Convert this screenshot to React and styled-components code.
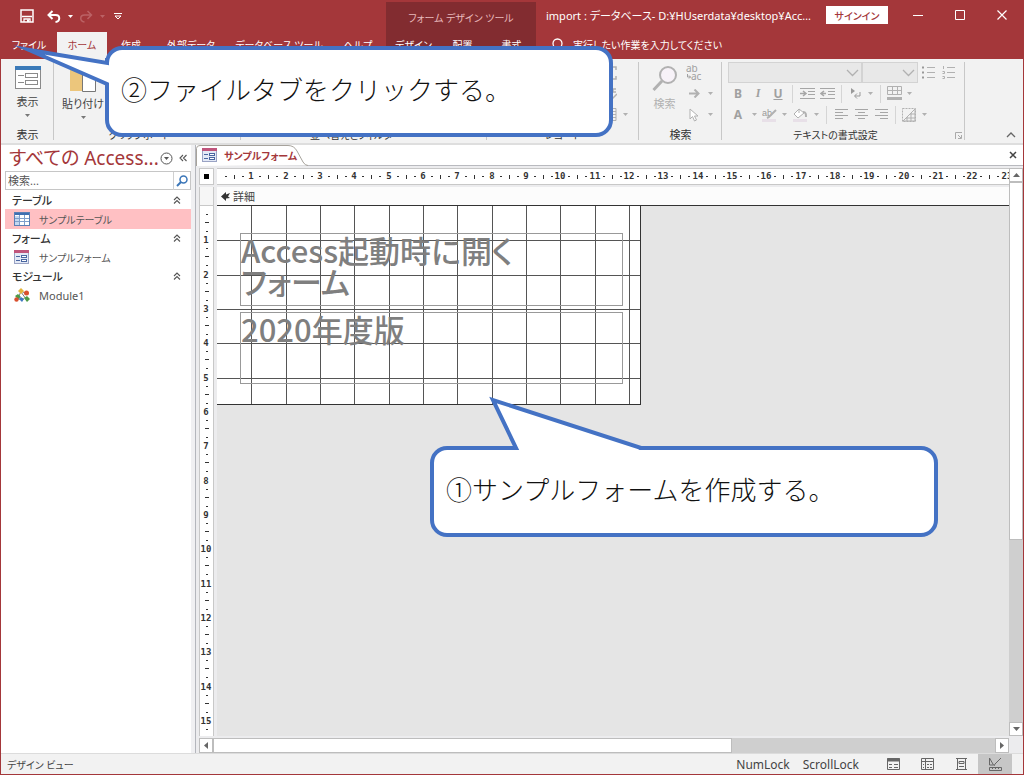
import React, { useEffect, useRef, useState } from "react";
import styled, { createGlobalStyle, css } from "styled-components";

const theme = {
    red: "#a4373a",
    darkRed: "#822c30",
    ribbon: "#f2f2f2",
    text: "#444444",
    disabled: "#b1b1b1",
    callout: "#4472c4",
    font: `"Noto Sans", "Noto Sans CJK JP", sans-serif`,
    jpFont: `"Noto Sans CJK JP", sans-serif`,
};

const mainTabs = [
    { name: "ファイル", width: 56 },
    { name: "ホーム", width: 50, active: true },
    { name: "作成", width: 48 },
    { name: "外部データ", width: 72 },
    { name: "データベース ツール", width: 104 },
    { name: "ヘルプ", width: 54 },
];

const designTabs = ["デザイン", "配置", "書式"];

// one centimetre on the rulers and on the grid
const cm = (n) => Math.round((n * 103) / 3);
const range = (n) => Array.from({ length: n }, (_, i) => i);

const useSize = () => {
    const ref = useRef(null);
    const [size, setSize] = useState({ width: 0, height: 0 });

    useEffect(() => {
        const measure = () => setSize({
            width: ref.current.clientWidth,
            height: ref.current.clientHeight,
        });
        measure();
        window.addEventListener("resize", measure);
        return () => window.removeEventListener("resize", measure);
    }, []);

    return [ref, size];
};

const TableIcon = () => (
    <svg width="16" height="14" viewBox="0 0 16 14">
        <rect x="0.5" y="0.5" width="15" height="13" fill="#fff" stroke="#5b7fb5" />
        <rect x="1" y="1" width="14" height="2" fill="#3f6fb0" />
        <rect x="1" y="4" width="4" height="9" fill="#c5d8f0" />
        <path d="M1 6.5h14M1 9.5h14M5.5 3v10M10.5 3v10" stroke="#7f9fcb" />
    </svg>
);

const FormIcon = () => (
    <svg width="15" height="14" viewBox="0 0 15 14">
        <rect x="0.5" y="0.5" width="14" height="13" fill="#e3e9f6" stroke="#9aa3c4" />
        <rect x="0" y="0" width="15" height="3" fill="#c0557c" />
        <path d="M2 6.5h4M2 10.5h4" stroke="#4a66a0" />
        <rect x="7.5" y="5.5" width="5" height="2" fill="#fff" stroke="#4a66a0" />
        <rect x="7.5" y="9.5" width="5" height="2" fill="#fff" stroke="#4a66a0" />
    </svg>
);

const ModuleIcon = () => (
    <svg width="16" height="14" viewBox="0 0 16 14">
        <path d="M7 3L4 11M7 3l6 3M4 11l6 0M7 4l5 7" stroke="#777" fill="none" />
        <path d="M4 3l3-3 3 3-3 3z" fill="#e3b53c" />
        <path d="M1 8l3-2 3 3-3 2z" fill="#4d9a46" />
        <circle cx="12.5" cy="5" r="2.5" fill="#d9502e" />
        <circle cx="2.5" cy="11.5" r="2.2" fill="#d9502e" />
        <path d="M5 11l2-2 3 2-2 3z" fill="#3f78c0" />
        <path d="M10 10l3-2 3 3-3 3z" fill="#4d9a46" />
    </svg>
);

const DownArrow = ({ color = "#777" }) => (
    <svg width="5" height="3" viewBox="0 0 5 3">
        <path d="M0 0h5L2.5 3z" fill={color} />
    </svg>
);

const Collapse = () => (
    <svg width="8" height="8" viewBox="0 0 8 8">
        <path d="M1 4l3-3 3 3M1 7.5l3-3 3 3" stroke="#555" fill="none" strokeWidth="1.1" />
    </svg>
);

const Lines = ({ rows }) => (
    <svg width="13" height="11" viewBox="0 0 13 11">
        {rows.map(([x, w], i) => (
            <rect key={i} x={x} y={i * 3} width={w} height="1" fill="#a6a6a6" />
        ))}
    </svg>
);

const Arrow = ({ label }) => (
    <Tool $w={12} aria-label={label} disabled>
        <DownArrow color={theme.disabled} />
    </Tool>
);

const FontBox = ({ label, width }) => (
    <SelectWrap $w={width}>
        <Select aria-label={label} disabled />
        <svg width="13" height="8" viewBox="0 0 13 8">
            <path d="M1 1l5.5 5.5L12 1" stroke={theme.disabled} fill="none" strokeWidth="1.3" />
        </svg>
    </SelectWrap>
);

const Header = () => (
    <Top>
        <QuickAccess>
            <QuickButton $w={28} aria-label="上書き保存">
                <svg width="14" height="14" viewBox="0 0 14 14">
                    <path d="M1 1h12v12H1z" fill="none" stroke="#fff" strokeWidth="1.5" />
                    <path d="M2 7.5h10M4 13v-3h6v3" fill="none" stroke="#fff" strokeWidth="1.3" />
                    <rect x="7" y="10.5" width="2" height="2.5" fill="#fff" />
                </svg>
            </QuickButton>
            <QuickButton $w={26} aria-label="元に戻す">
                <svg width="14" height="13" viewBox="0 0 14 13">
                    <path d="M5.5 1L1.5 5l4 4M2 5h6.500c5 0 5 6.500 0 7" fill="none" stroke="#fff" strokeWidth="2" />
                </svg>
            </QuickButton>
            <QuickButton $w={6} aria-label="元に戻す一覧"><DownArrow color="#fff" /></QuickButton>
            <QuickButton $w={26} aria-label="やり直し">
                <svg width="14" height="13" viewBox="0 0 14 13">
                    <path d="M8.5 1l4 4-4 4M12 5H5.500c-5 0-5 6.500 0 7" fill="none" stroke="#bb6265" strokeWidth="1.5" />
                </svg>
            </QuickButton>
            <QuickButton $w={6} aria-label="やり直し一覧"><DownArrow color="#bb6265" /></QuickButton>
            <QuickButton $w={26} aria-label="クイック アクセスのカスタマイズ">
                <svg width="8" height="7" viewBox="0 0 8 7">
                    <path d="M0 0.5h8M1 3h6L4 6z" fill="none" stroke="#fff" />
                </svg>
            </QuickButton>
        </QuickAccess>
        <ToolTitle>フォーム デザイン ツール</ToolTitle>
        <TitleArea>
            <WindowTitle>import : データベース- D:¥HUserdata¥desktop¥Acc…</WindowTitle>
            <SignIn>サインイン</SignIn>
            <WindowButton aria-label="最小化">
                <svg width="10" height="11"><path d="M0 5.5h10" stroke="#fff" /></svg>
            </WindowButton>
            <WindowButton aria-label="最大化">
                <svg width="10" height="10"><path d="M0.5 0.5h9v9h-9z" fill="none" stroke="#fff" /></svg>
            </WindowButton>
            <WindowButton aria-label="閉じる">
                <svg width="10" height="10"><path d="M0.5 0.5l9 9M9.5 0.5l-9 9" stroke="#fff" strokeWidth="1.2" /></svg>
            </WindowButton>
        </TitleArea>
        <TabRow>
            {mainTabs.map((tab) => (
                <Tab key={tab.name} $w={tab.width} $active={tab.active}>{tab.name}</Tab>
            ))}
        </TabRow>
        <DesignTabs>
            {designTabs.map((name) => (
                <Tab key={name}>{name}</Tab>
            ))}
        </DesignTabs>
        <TellMe>
            <svg width="14" height="14" viewBox="0 0 14 14">
                <circle cx="7.5" cy="5.5" r="4.5" fill="none" stroke="#fff" strokeWidth="1.3" />
                <path d="M4.5 9L1.5 13" stroke="#fff" strokeWidth="1.3" />
            </svg>
            <TellMeInput aria-label="操作アシスト" placeholder="実行したい作業を入力してください" />
        </TellMe>
    </Top>
);

const Ribbon = () => (
    <RibbonBar>
        <Group $w={53}>
            <BigButton>
                <svg width="26" height="24" viewBox="0 0 26 24">
                    <rect x="0.5" y="0.5" width="25" height="22" fill="#fff" stroke="#8a8a8a" />
                    <rect width="26" height="4" fill="#3b7ab8" />
                    <path d="M3 9.5h6M3 16.5h6" stroke="#8a8a8a" />
                    <rect x="10.5" y="7.5" width="12" height="4" fill="#fff" stroke="#8a8a8a" />
                    <rect x="10.5" y="14.5" width="12" height="4" fill="#fff" stroke="#8a8a8a" />
                </svg>
                表示
                <DownArrow />
            </BigButton>
            <GroupLabel>表示</GroupLabel>
        </Group>
        <Group $w={187}>
            <GroupBody>
                <BigButton $w={46}>
                    <svg width="28" height="26" viewBox="0 0 28 26">
                        <rect x="1" y="0" width="22" height="25" fill="#ecc67c" />
                        <path d="M13.5 7.5h9l4 4v14h-13z" fill="#fff" stroke="#777" />
                        <path d="M22.5 7.5v4h4" fill="none" stroke="#777" />
                    </svg>
                    貼り付け
                    <DownArrow />
                </BigButton>
            </GroupBody>
            <GroupLabel $launcher $kana>クリップボード</GroupLabel>
        </Group>
        <Group $w={246}>
            <GroupBody />
            <GroupLabel $launcher $kana>並べ替えとフィルター</GroupLabel>
        </Group>
        <Group $w={152}>
            <GroupBody $end>
                <ToolColumn>
                    <ToolLine>
                        <Tool $w={18} aria-label="集計" disabled>
                            <svg width="14" height="14"><path d="M13 4V1H1l6 6-6 6h12v-3" fill="none" stroke={theme.disabled} strokeWidth="1.5" /></svg>
                        </Tool>
                    </ToolLine>
                    <ToolLine>
                        <Tool $w={18} aria-label="スペル チェック" disabled>
                            <svg width="14" height="14"><path d="M13 2h-3v3h3M5 9l3 4 6-6" fill="none" stroke={theme.disabled} strokeWidth="1.5" /></svg>
                        </Tool>
                    </ToolLine>
                    <ToolLine>
                        <Tool $w={18} aria-label="その他" disabled>
                            <svg width="14" height="13"><path d="M1 0.5h12v12H1zM1 3.5h12M5 3.5v9M9 3.5v9M1 6.5h12M1 9.5h12" fill="none" stroke={theme.disabled} /></svg>
                        </Tool>
                        <Arrow label="その他の一覧" />
                    </ToolLine>
                </ToolColumn>
            </GroupBody>
            <GroupLabel $kana>レコード</GroupLabel>
        </Group>
        <Group $w={83}>
            <GroupBody>
                <BigButton $w={44} disabled>
                    <svg width="26" height="26" viewBox="0 0 26 26">
                        <path d="M10 15L1.5 24" stroke={theme.disabled} strokeWidth="3" />
                        <circle cx="16" cy="9" r="8" fill="#f7f2f8" stroke={theme.disabled} strokeWidth="2" />
                    </svg>
                    検索
                </BigButton>
                <ToolColumn>
                    <ToolLine>
                        <Tool $w={20} aria-label="置換" disabled>
                            <svg width="16" height="16" fill="#a0a0a0" fontSize="10" fontFamily="Noto Sans">
                                <text x="0" y="7">ab</text>
                                <text x="5" y="15">ac</text>
                                <path d="M1.5 9v3h3M3 10.5l1.5 1.5L3 13.500" fill="none" stroke="#a0a0a0" />
                            </svg>
                        </Tool>
                    </ToolLine>
                    <ToolLine>
                        <Tool $w={20} aria-label="ジャンプ" disabled>
                            <svg width="11" height="9"><path d="M0 4.5h9M5.5 0.5l4 4-4 4" fill="none" stroke={theme.disabled} strokeWidth="2" /></svg>
                        </Tool>
                        <Arrow label="ジャンプの一覧" />
                    </ToolLine>
                    <ToolLine>
                        <Tool $w={20} aria-label="選択" disabled>
                            <svg width="10" height="14"><path d="M1 1v10l2.5-2.5L5.5 13l2-1-2-4H9z" fill="#fff" stroke={theme.disabled} /></svg>
                        </Tool>
                        <Arrow label="選択の一覧" />
                    </ToolLine>
                </ToolColumn>
            </GroupBody>
            <GroupLabel>検索</GroupLabel>
        </Group>
        <Group $w={243}>
            <GroupBody>
                <FontTools>
                    <ToolLine>
                        <FontBox label="フォント" width={134} />
                        <FontBox label="フォント サイズ" width={56} />
                        <Tool $w={20} aria-label="箇条書き" disabled>
                            <svg width="13" height="13">
                                <path d="M0 1.5h2M0 6.5h2M0 11.5h2" stroke="#999" strokeWidth="2" />
                                <path d="M5 1.5h8M5 6.5h8M5 11.5h8" stroke={theme.disabled} />
                            </svg>
                        </Tool>
                        <Tool $w={20} aria-label="段落番号" disabled>
                            <svg width="13" height="15" stroke={theme.disabled} fill="none">
                                <path d="M5 2.5h8M5 7.5h8M5 12.5h8M1.5 1v3M0.5 6.500h2v2h-2M0.5 11.500h2v2h-2" />
                            </svg>
                        </Tool>
                    </ToolLine>
                    <ToolLine>
                        <Tool $w={20} $bold disabled>B</Tool>
                        <Tool $w={20} $serif disabled>I</Tool>
                        <Tool $w={20} $underline disabled>U</Tool>
                        <Divider />
                        <Tool $w={20} aria-label="インデント" disabled>
                            <svg width="15" height="11" stroke="#a6a6a6" fill="none"><path d="M0 0.5h15M8 3.5h7M8 6.5h7M0 10.5h15" /><path d="M0 5.5h5M3 3l3 2.5-3 2.5" strokeWidth="1.5" /></svg>
                        </Tool>
                        <Tool $w={20} aria-label="インデント解除" disabled>
                            <svg width="15" height="11" stroke="#a6a6a6" fill="none"><path d="M0 0.5h15M8 3.5h7M8 6.5h7M0 10.5h15" /><path d="M1 5.5h5M4 3L1 5.5 4 8" strokeWidth="1.5" /></svg>
                        </Tool>
                        <Divider />
                        <Tool $w={18} aria-label="文字列の方向" disabled>
                            <svg width="11" height="11"><path d="M1 0v6l4-3z" fill="#999" /><path d="M10 4v4H5M7 5.5L4.5 8 7 10.5" fill="none" stroke="#999" /></svg>
                        </Tool>
                        <Arrow label="文字列の方向の一覧" />
                        <Divider />
                        <Tool $w={18} aria-label="枠線" disabled>
                            <svg width="15" height="15"><path d="M0.5 0.5h14v8H0.5zM0 4.5h15M5.5 0v9M10.5 0v9" fill="none" stroke={theme.disabled} /><rect y="11" width="15" height="3" fill={theme.disabled} /></svg>
                        </Tool>
                        <Arrow label="枠線の一覧" />
                    </ToolLine>
                    <ToolLine>
                        <Tool $w={20} $bold disabled>A</Tool>
                        <Arrow label="フォントの色の一覧" />
                        <Tool $w={18} aria-label="蛍光ペン" disabled>
                            <svg width="15" height="14"><text x="0" y="8" fontSize="9" fontFamily="Liberation Sans" fill="#999">ab</text><path d="M14 2L7 9l-2 1" stroke={theme.disabled} strokeWidth="2" fill="none" /><rect y="11" width="14" height="3" fill="#e8e0e8" /></svg>
                        </Tool>
                        <Arrow label="蛍光ペンの一覧" />
                        <Tool $w={20} aria-label="背景色" disabled>
                            <svg width="15" height="14"><path d="M6 1L1 6l4 4 6-5zM6 1v4" fill="#fff" stroke={theme.disabled} /><path d="M10 4c3 0 3 2 3 5" stroke={theme.disabled} strokeWidth="2" fill="none" /><rect y="11" width="14" height="3" fill="#e8e0e8" /></svg>
                        </Tool>
                        <Arrow label="背景色の一覧" />
                        <Divider />
                        <Tool $w={20} aria-label="左揃え" disabled><Lines rows={[[0, 13], [0, 8], [0, 13], [0, 8]]} /></Tool>
                        <Tool $w={20} aria-label="中央揃え" disabled><Lines rows={[[0, 13], [3, 7], [0, 13], [3, 7]]} /></Tool>
                        <Tool $w={20} aria-label="右揃え" disabled><Lines rows={[[0, 13], [5, 8], [0, 13], [5, 8]]} /></Tool>
                        <Divider />
                        <Tool $w={18} aria-label="交互の行の色" disabled>
                            <svg width="14" height="14"><path d="M0.5 0.5h13v13H0.5z" fill="none" stroke={theme.disabled} strokeDasharray="2 1" /><path d="M1 13L13 1v12zM5 9v4M9 5v8M8 6h5M4 10h9" fill="none" stroke={theme.disabled} /></svg>
                        </Tool>
                        <Arrow label="交互の行の色の一覧" />
                    </ToolLine>
                </FontTools>
            </GroupBody>
            <GroupLabel $launcher $kana>
                テキストの書式設定
                <Launcher aria-label="テキストの書式設定を開く">
                    <svg width="7" height="7"><path d="M0.5 7V0.5H7M3 3l3 3M6.5 3v3.5H3" fill="none" stroke="#aaa" /></svg>
                </Launcher>
            </GroupLabel>
        </Group>
        <RibbonEnd>
            <Launcher aria-label="リボンを折りたたむ">
                <svg width="10" height="6"><path d="M1 5l4-4 4 4" fill="none" stroke="#666" strokeWidth="1.3" /></svg>
            </Launcher>
        </RibbonEnd>
    </RibbonBar>
);

const NavSection = ({ title, icon, item, selected, kana }) => (
    <>
        <SectionTitle>
            {title}
            <Collapse />
        </SectionTitle>
        <NavItem href="#" $selected={selected} $kana={kana}>
            <NavIcon>{icon}</NavIcon>
            {item}
        </NavItem>
    </>
);

const NavigationPane = () => (
    <Nav>
        <NavHeader>
            <NavTitle>すべての Access...</NavTitle>
            <IconButton aria-label="一覧を選択">
                <svg width="13" height="13"><circle cx="6.5" cy="6.5" r="5.5" fill="none" stroke="#555" /><path d="M4 5h5L6.5 8z" fill="#555" /></svg>
            </IconButton>
            <IconButton aria-label="ナビゲーション ウィンドウを閉じる">
                <svg width="8" height="8"><path d="M4 1L1 4l3 3M7.5 1l-3 3 3 3" fill="none" stroke="#555" strokeWidth="1.1" /></svg>
            </IconButton>
        </NavHeader>
        <SearchBox>
            <SearchInput aria-label="検索" placeholder="検索..." />
            <SearchButton aria-label="検索の実行">
                <svg width="12" height="12"><circle cx="7.5" cy="4.5" r="3.5" fill="none" stroke="#3b76b8" strokeWidth="1.5" /><path d="M5 7L1 11" stroke="#3b76b8" strokeWidth="2" /></svg>
            </SearchButton>
        </SearchBox>
        <NavSection title="テーブル" icon={<TableIcon />} item="サンプルテーブル" kana selected />
        <NavSection title="フォーム" icon={<FormIcon />} item="サンプルフォーム" kana />
        <NavSection title="モジュール" icon={<ModuleIcon />} item="Module1" />
    </Nav>
);

const HorizontalRuler = () => {
    const [ref, { width }] = useSize();

    return (
        <RulerTop ref={ref}>
            <RulerSvg width="100%" height="15">
                {range(100).filter((i) => cm(i) < width).map((i) => (
                    <g key={i}>
                        {i > 0 && <text x={cm(i)} y="10">{i}</text>}
                        <rect x={cm(i) + 8} y="7" width="2" height="1" />
                        <rect x={cm(i) + 17} y="6" width="1" height="4" />
                        <rect x={cm(i) + 25} y="7" width="2" height="1" />
                    </g>
                ))}
            </RulerSvg>
        </RulerTop>
    );
};

const VerticalRuler = () => {
    const [ref, { height }] = useSize();

    return (
        <RulerLeft ref={ref}>
            <SectionSelector aria-label="詳細の選択" />
            <RulerSvg width="13" height={Math.max(height - 19, 0)}>
                {range(60).filter((i) => cm(i) < height - 24).map((i) => (
                    <g key={i}>
                        {i > 0 && <text x="6" y={cm(i) + 3}>{i}</text>}
                        <rect x="6" y={cm(i) + 8} width="2" height="1" />
                        <rect x="5" y={cm(i) + 16} width="4" height="1" />
                        <rect x="6" y={cm(i) + 25} width="2" height="1" />
                    </g>
                ))}
            </RulerSvg>
        </RulerLeft>
    );
};

const FormDesign = () => (
    <FormSurface>
        <Grid>
            {range(12).map((i) => (
                <rect key={`v${i}`} x={cm(i + 1)} y="0" width="1" height="100%" />
            ))}
            {range(5).map((i) => (
                <rect key={`h${i}`} x="0" y={cm(i + 1)} width="100%" height="1" />
            ))}
        </Grid>
        <FormLabel>Access起動時に開く<br />フォーム</FormLabel>
        <FormLabel>2020年度版</FormLabel>
    </FormSurface>
);

const Designer = () => (
    <Document>
        <DocumentTabs>
            <DocumentTab>
                <svg width="112" height="21">
                    <path d="M0.5 21V3.5Q0.5 0.5 4 0.5H92Q98 0.5 101 6L107 17Q109 20.5 112 20.5" fill="#fff" stroke="#a7a39c" />
                </svg>
                <FormIcon />
                <span>サンプルフォーム</span>
            </DocumentTab>
            <IconButton aria-label="サンプルフォームを閉じる">
                <svg width="8" height="8"><path d="M1 1l6 6M7 1L1 7" stroke="#444" strokeWidth="1.5" /></svg>
            </IconButton>
        </DocumentTabs>
        <Workspace>
            <Corner aria-label="フォームの選択" />
            <HorizontalRuler />
            <VerticalRuler />
            <Canvas>
                <DetailBar>
                    <svg width="9" height="9"><path d="M0 4.5L5 0v2.5L9 1 7 4.5 9 6 5 6.5V9z" fill="#333" /></svg>
                    詳細
                </DetailBar>
                <FormDesign />
            </Canvas>
            <VerticalScroll>
                <ScrollButton aria-label="上へ"><svg width="7" height="4"><path d="M0 4h7L3.5 0z" fill="#666" /></svg></ScrollButton>
                <Thumb $grow={358} />
                <Track $grow={183} />
                <ScrollButton aria-label="下へ"><svg width="7" height="4"><path d="M0 0h7L3.5 4z" fill="#666" /></svg></ScrollButton>
            </VerticalScroll>
            <HorizontalScroll>
                <ScrollButton aria-label="左へ"><svg width="4" height="7"><path d="M4 0v7L0 3.5z" fill="#666" /></svg></ScrollButton>
                <Thumb $grow={518} />
                <Track $grow={263} />
                <ScrollButton aria-label="右へ"><svg width="4" height="7"><path d="M0 0v7l4-3.5z" fill="#666" /></svg></ScrollButton>
            </HorizontalScroll>
        </Workspace>
    </Document>
);

const Status = () => (
    <StatusBar>
        <StatusText>デザイン ビュー</StatusText>
        <span>NumLock</span>
        <span>ScrollLock</span>
        <Views>
            <ViewButton aria-label="フォーム ビュー">
                <svg width="13" height="12" fill="none" stroke="#666"><path d="M0.5 0.5h12v11H0.5z" /><path d="M0 2h13" strokeWidth="3" /><path d="M2 6.5h3M2 9.5h3M7 6.5h4M7 9.5h4" /></svg>
            </ViewButton>
            <ViewButton aria-label="データシート ビュー">
                <svg width="13" height="12" fill="none" stroke="#666"><path d="M0.5 0.5h12v11H0.5zM0 3.5h13M4.5 0v12M2 6.5h1M2 9.5h1M6 6.5h2M9 6.5h2M6 9.5h2M9 9.5h2" /></svg>
            </ViewButton>
            <ViewButton aria-label="レイアウト ビュー">
                <svg width="11" height="12" fill="none" stroke="#666"><path d="M0 0.5h11M0 11.5h11M1.5 0v12M9.5 0v12M3 3.5h5v2H3zM3 8.5h5" /></svg>
            </ViewButton>
            <ViewButton aria-label="デザイン ビュー" $active>
                <svg width="14" height="13" fill="none" stroke="#666"><path d="M1.5 0v7h4zM13 0L7 6l-1 2" /><path d="M1.5 9.5h12v3h-12zM4.5 10v1M7.5 10v1M10.5 10v1" /></svg>
            </ViewButton>
        </Views>
    </StatusBar>
);

const App = () => {
    return (
        <>
            <GlobalStyle />
            <Window>
                <Header />
                <Ribbon />
                <Main>
                    <NavigationPane />
                    <Designer />
                </Main>
                <Status />
                <Callout $left={104} $top={46}>
                    <Tail $left={-97} $top={-6} width="100" height="52" viewBox="0 0 100 52">
                        <path d="M95 19L17 6l78 34h3V19z" fill="#fff" />
                        <path d="M95 14V19L17 6l78 34v6" fill="none" stroke={theme.callout} strokeWidth="4" strokeMiterlimit="12" />
                    </Tail>
                    ②ファイルタブをクリックする。
                </Callout>
                <Callout $left={429} $top={446}>
                    <Tail $left={52} $top={-54} width="166" height="58" viewBox="0 0 166 58">
                        <path d="M30 52L7 4l148 48-4 3H31z" fill="#fff" />
                        <path d="M22 52H30L7 4l148 48h7" fill="none" stroke={theme.callout} strokeWidth="4" />
                    </Tail>
                    ①サンプルフォームを作成する。
                </Callout>
            </Window>
        </>
    );
};

const GlobalStyle = createGlobalStyle`
    * {
        box-sizing: border-box;
    }

    body {
        margin: 0;
        font-family: ${theme.font};
        font-size: 11px;
        font-feature-settings: "palt";
        color: ${theme.text};
    }

    button, input, select {
        font: inherit;
        font-feature-settings: inherit;
        color: inherit;
        border: 0;
        border-radius: 0;
        padding: 0;
        background: none;
        outline: none;
    }

    svg {
        flex-shrink: 0;
    }
`;

const center = css`
    display: flex;
    align-items: center;
    justify-content: center;
`;

const Window = styled.div`
    position: relative;
    display: flex;
    flex-direction: column;
    height: 100vh;
    overflow: hidden;
    border: 1px solid ${theme.red};
    border-top: 0;
    background: #fff;
`;

const Top = styled.header`
    display: grid;
    grid-template-columns: 385px 150px 1fr;
    grid-template-rows: 32px 27px;
    background: ${theme.red};
    color: #fff;
`;

const QuickAccess = styled.div`
    display: flex;
    align-items: center;
    padding-left: 12px;
`;

const QuickButton = styled.button`
    ${center}
    width: ${(props) => props.$w}px;
    height: 24px;
`;

const ToolTitle = styled.div`
    ${center}
    margin-top: 2px;
    background: ${theme.darkRed};
    color: #e8b9bb;
    font-size: 10px;
`;

const TitleArea = styled.div`
    display: flex;
    align-items: center;
    min-width: 0;
    padding-bottom: 2px;
`;

const WindowTitle = styled.div`
    flex: 1;
    padding-left: 10px;
    overflow: hidden;
    white-space: nowrap;
`;

const SignIn = styled.button`
    width: 62px;
    height: 18px;
    margin-right: 9px;
    background: #fff;
    color: ${theme.red};
    font-size: 10px;
    font-weight: 500;
`;

const WindowButton = styled.button`
    ${center}
    width: 42px;
    height: 30px;
`;

const TabRow = styled.div`
    display: flex;
`;

const Tab = styled.button`
    ${center}
    width: ${(props) => (props.$w ? `${props.$w}px` : "50px")};
    padding-bottom: 2px;
    white-space: nowrap;
    font-size: 10px;
    color: ${(props) => (props.$active ? theme.red : "#fff")};
    background: ${(props) => (props.$active ? theme.ribbon : "transparent")};
`;

const DesignTabs = styled(TabRow)`
    background: ${theme.darkRed};
    padding-left: 3px;
`;

const TellMe = styled.label`
    display: flex;
    align-items: center;
    gap: 9px;
    padding: 0 0 2px 14px;
`;

const TellMeInput = styled.input`
    flex: 1;
    font-size: 10px;

    &::placeholder {
        color: #fff;
        opacity: 1;
    }
`;

const RibbonBar = styled.div`
    display: flex;
    padding: 3px 0 1px;
    background: ${theme.ribbon};
    border-bottom: 2px solid #dedede;
`;

const Group = styled.section`
    position: relative;
    display: flex;
    flex-direction: column;
    width: ${(props) => props.$w}px;
    height: 80px;

    &::after {
        content: "";
        position: absolute;
        right: 0;
        top: 0;
        width: 1px;
        height: 78px;
        background: #c8c8c8;
    }
`;

const GroupBody = styled.div`
    display: flex;
    height: 64px;
    padding: 0 6px;
    justify-content: ${(props) => (props.$end ? "flex-end" : "flex-start")};
`;

const GroupLabel = styled.div`
    ${center}
    position: relative;
    flex: 1;
    white-space: nowrap;
    color: #333;
    font-size: ${(props) => (props.$kana ? 10 : 11)}px;
    padding-right: ${(props) => (props.$launcher ? 16 : 0)}px;
`;

const Launcher = styled.button`
    ${center}
    width: 14px;
    height: 14px;

    ${GroupLabel} & {
        position: absolute;
        right: 0;
        top: 2px;
    }
`;

const RibbonEnd = styled.div`
    flex: 1;
    display: flex;
    align-items: flex-end;
    justify-content: flex-end;
    padding-right: 5px;
`;

const BigButton = styled.button`
    display: flex;
    flex-direction: column;
    align-items: center;
    gap: 3px;
    width: ${(props) => (props.$w ? `${props.$w}px` : "100%")};
    height: 64px;
    padding-top: 4px;
    line-height: 18px;
    white-space: nowrap;
    color: ${(props) => (props.disabled ? theme.disabled : theme.text)};
`;

const ToolColumn = styled.div`
    display: flex;
    flex-direction: column;
    width: 32px;
`;

const FontTools = styled(ToolColumn)`
    width: 100%;
`;

const ToolLine = styled.div`
    display: flex;
    align-items: center;
    height: 21px;
`;

const Tool = styled.button`
    ${center}
    width: ${(props) => props.$w}px;
    height: 20px;
    color: #a0a0a0;
    font-size: 12px;
    font-weight: ${(props) => (props.$bold || props.$underline ? "bold" : "normal")};
    text-decoration: ${(props) => (props.$underline ? "underline" : "none")};
    ${(props) => props.$serif && css`
        font-family: "Liberation Serif", serif;
        font-style: italic;
        font-weight: bold;
    `}
`;

const Divider = styled.div`
    width: 1px;
    height: 18px;
    margin: 0 4px;
    background: #d5d5d5;
`;

const SelectWrap = styled.div`
    position: relative;
    width: ${(props) => props.$w}px;
    height: 21px;

    svg {
        position: absolute;
        right: 3px;
        top: 7px;
        pointer-events: none;
    }
`;

const Select = styled.select`
    width: 100%;
    height: 100%;
    appearance: none;
    background: #e5e5e5;
    border: 1px solid #c6c6c6;
`;

const Main = styled.main`
    flex: 1;
    display: flex;
    min-height: 0;
`;

const Nav = styled.nav`
    width: 195px;
    padding: 0 4px;
    border-right: 1px solid #b4b6bc;
    box-shadow: inset -4px 0 #f0f0f2;
`;

const NavHeader = styled.div`
    display: flex;
    align-items: center;
    height: 26px;
    padding-left: 4px;
`;

const NavTitle = styled.div`
    flex: 1;
    font-size: 19px;
    line-height: 26px;
    white-space: nowrap;
    color: ${theme.red};
`;

const IconButton = styled.button`
    ${center}
    width: 17px;
    height: 18px;
`;

const SearchBox = styled.div`
    display: flex;
    height: 19px;
    margin-bottom: 1px;
    border: 1px solid #c6c6c6;
`;

const SearchInput = styled.input`
    flex: 1;
    min-width: 0;
    padding-left: 2px;

    &::placeholder {
        color: #555;
        opacity: 1;
    }
`;

const SearchButton = styled(IconButton)`
    border-left: 1px solid #d0d0d0;
`;

const SectionTitle = styled.div`
    display: flex;
    align-items: center;
    justify-content: space-between;
    height: 18px;
    padding: 0 10px 0 7px;
    font-weight: 500;
    color: #333;
`;

const NavItem = styled.a`
    display: flex;
    align-items: center;
    height: 20px;
    padding-left: 7px;
    color: #555;
    font-size: ${(props) => (props.$kana ? 10 : 11)}px;
    text-decoration: none;
    background: ${(props) => (props.$selected ? "#ffc0c3" : "transparent")};
`;

const NavIcon = styled.span`
    display: flex;
    width: 20px;
    margin: 0 5px 0 2px;
`;

const Document = styled.section`
    flex: 1;
    display: flex;
    flex-direction: column;
    min-width: 0;
`;

const DocumentTabs = styled.div`
    display: flex;
    align-items: center;
    justify-content: space-between;
    height: 21px;
    padding-right: 2px;
    border-bottom: 1px solid #b9babf;
`;

const DocumentTab = styled.div`
    position: relative;
    display: flex;
    align-items: center;
    gap: 7px;
    height: 21px;
    padding-left: 6px;
    color: ${theme.red};
    font-size: 10px;
    font-weight: 600;

    svg, span {
        position: relative;
    }

    svg:first-child {
        position: absolute;
        left: 0;
        top: 0;
    }
`;

const Workspace = styled.div`
    flex: 1;
    display: grid;
    grid-template-columns: 18px 1fr 14px;
    grid-template-rows: 17px 1fr 15px;
    row-gap: 2px;
    padding: 2px 0 0 3px;
    min-height: 0;
    background: #ececee;
`;

const Corner = styled.button`
    ${center}
    width: 15px;
    height: 17px;
    background: #fff;
    border: 1px solid #c8c8c8;

    &::after {
        content: "";
        width: 5px;
        height: 5px;
        background: #000;
    }
`;

const RulerTop = styled.div`
    min-width: 0;
    overflow: hidden;
    background: #fff;
    border-top: 1px solid #c8c8c8;
    border-bottom: 1px solid #c8c8c8;
`;

const RulerLeft = styled.div`
    width: 15px;
    min-height: 0;
    overflow: hidden;
    background: #fff;
    border-right: 1px solid #c8c8c8;
    border-left: 1px solid #c8c8c8;
`;

const RulerSvg = styled.svg`
    display: block;
    fill: #333;

    text {
        font-family: "DejaVu Sans Mono", monospace;
        font-size: 9px;
        font-weight: bold;
        text-anchor: middle;
    }
`;

const SectionSelector = styled.button`
    display: block;
    width: 100%;
    height: 19px;
    background: #f6f6f6;
    border-bottom: 1px solid #c8c8c8;
`;

const Canvas = styled.div`
    min-width: 0;
    min-height: 0;
    overflow: hidden;
    background: #e5e5e5;
`;

const DetailBar = styled.div`
    display: flex;
    align-items: center;
    gap: 3px;
    height: 19px;
    padding-left: 4px;
    background: #fcfcfc;
    border-bottom: 1px solid #333;
`;

const FormSurface = styled.div`
    position: relative;
    display: flex;
    flex-direction: column;
    gap: 6px;
    width: 424px;
    height: 199px;
    padding: 27px 17px 20px 23px;
    background: #fff;
    border-right: 1px solid #333;
    border-bottom: 1px solid #333;
`;

const Grid = styled.svg`
    position: absolute;
    left: 0;
    top: 0;
    width: 100%;
    height: 100%;
    fill: #555;
`;

const FormLabel = styled.div`
    position: relative;
    height: 73px;
    border: 1px solid #999;
    font-family: ${theme.jpFont};
    font-size: 31px;
    font-weight: 500;
    line-height: 31px;
    color: #7f7f7f;
`;

const VerticalScroll = styled.div`
    grid-column: 3;
    grid-row: 1 / 3;
    display: flex;
    flex-direction: column;
`;

const HorizontalScroll = styled.div`
    grid-column: 1 / 3;
    grid-row: 3;
    display: flex;
`;

const ScrollButton = styled.button`
    ${center}
    min-width: 14px;
    min-height: 14px;
    background: #fff;
    border: 1px solid #bdbdbd;
`;

const Thumb = styled.div`
    flex: ${(props) => props.$grow};
    background: #fff;
    border: 1px solid #bdbdbd;
`;

const Track = styled.div`
    flex: ${(props) => props.$grow};
    background: #cfcfcf;
`;

const StatusBar = styled.footer`
    display: flex;
    align-items: center;
    gap: 13px;
    height: 21px;
    padding: 0 11px 0 6px;
    background: ${theme.ribbon};
    border-top: 1px solid #dcdcdc;
    font-size: 12px;
`;

const StatusText = styled.div`
    flex: 1;
    font-size: 10px;
`;

const Views = styled.div`
    display: flex;
    padding-left: 4px;
`;

const ViewButton = styled.button`
    ${center}
    width: 34px;
    height: 20px;
    background: ${(props) => (props.$active ? "#c6c6c6" : "transparent")};
`;

const Callout = styled.div`
    position: absolute;
    left: ${(props) => props.$left}px;
    top: ${(props) => props.$top}px;
    display: flex;
    align-items: center;
    width: 508px;
    height: 91px;
    padding: 0 12px 6px;
    background: #fff;
    border: 4px solid ${theme.callout};
    border-radius: 17px;
    font-family: ${theme.jpFont};
    font-feature-settings: normal;
    font-size: 26px;
    font-weight: 300;
    color: #111;
`;

const Tail = styled.svg`
    position: absolute;
    left: ${(props) => props.$left}px;
    top: ${(props) => props.$top}px;
`;

export default App;
